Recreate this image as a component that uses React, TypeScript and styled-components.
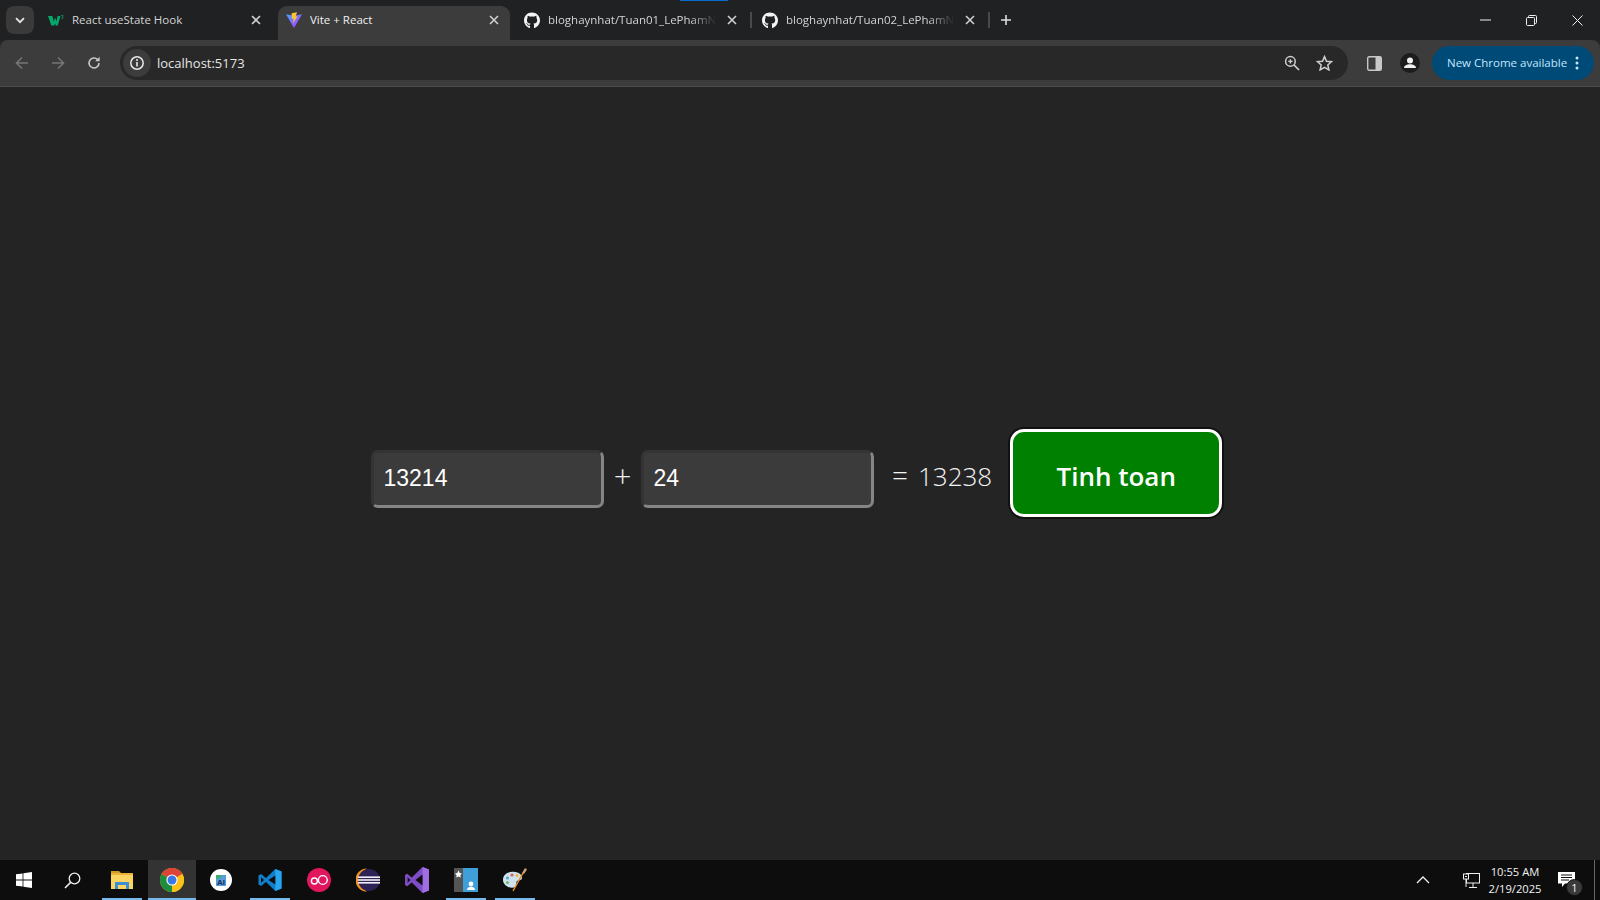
import React from "react";
import styled, { createGlobalStyle } from "styled-components";
import { FaGithub } from "react-icons/fa";

const Global = createGlobalStyle`
  html, body { margin: 0; padding: 0; height: 100%; background: #242424; overflow: hidden; }
  #root { height: 100%; }
  * { box-sizing: border-box; }
`;

const Screen = styled.div`
  width: 1600px;
  height: 900px;
  display: flex;
  flex-direction: column;
  font-family: "Open Sans", "Liberation Sans", sans-serif;
  color: #fff;
  position: relative;
`;

/* ---------- tab strip ---------- */
const TabStrip = styled.div`
  height: 40px;
  flex: none;
  background: #1f2122;
  display: flex;
  align-items: flex-start;
  padding-left: 6px;
  position: relative;
`;
const ProgressMark = styled.div`
  position: absolute;
  left: 680px;
  top: 0;
  width: 48px;
  height: 1px;
  background: #0a6cd0;
`;
const TabSearch = styled.div`
  width: 28px;
  height: 28px;
  margin: 6px 6px 0 0;
  border-radius: 8px;
  background: #3a3a3a;
  display: flex;
  align-items: center;
  justify-content: center;
`;
const Tab = styled.div<{ $active?: boolean; $sep?: boolean }>`
  width: 238px;
  height: 34px;
  margin-top: 6px;
  padding: 0 0 6px 8px;
  display: flex;
  align-items: center;
  position: relative;
  flex: none;
  font-size: 11.5px;
  color: ${(p) => (p.$active ? "#f1f1f1" : "#d4d4d4")};
  &::before {
    content: "";
    position: absolute;
    left: 0;
    top: 0;
    bottom: 0;
    width: 232px;
    background: ${(p) => (p.$active ? "#3c3c3c" : "transparent")};
    border-radius: 9px 9px 0 0;
  }
  &::after {
    content: "";
    display: ${(p) => (p.$sep ? "block" : "none")};
    position: absolute;
    left: 234px;
    top: 6px;
    width: 2px;
    height: 16px;
    background: #4a4a4a;
  }
`;
const Favicon = styled.span`
  width: 16px;
  height: 16px;
  flex: none;
  display: flex;
  align-items: center;
  justify-content: center;
  position: relative;
  color: #f4f4f4;
  margin-right: 8px;
`;
const TabTitle = styled.span<{ $fade?: boolean }>`
  width: 170px;
  flex: none;
  white-space: nowrap;
  overflow: hidden;
  position: relative;
  margin-top: -1px;
  ${(p) =>
    p.$fade
      ? "-webkit-mask-image: linear-gradient(90deg, #000 142px, transparent 168px); mask-image: linear-gradient(90deg, #000 142px, transparent 168px);"
      : ""}
`;
const TabClose = styled.span`
  width: 16px;
  height: 16px;
  margin-left: 6px;
  flex: none;
  display: flex;
  align-items: center;
  justify-content: center;
  position: relative;
`;
const NewTab = styled.div`
  width: 16px;
  height: 28px;
  margin: 6px 0 0 6px;
  display: flex;
  align-items: center;
  justify-content: center;
`;
const WindowControls = styled.div`
  margin-left: auto;
  display: flex;
`;
const WinButton = styled.div`
  width: 46px;
  height: 40px;
  display: flex;
  align-items: center;
  justify-content: center;
`;

/* ---------- toolbar ---------- */
const Toolbar = styled.div`
  height: 47px;
  flex: none;
  background: #3c3c3c;
  border-bottom: 1px solid #4c4c4c;
  border-top-left-radius: 8px;
  border-top-right-radius: 8px;
  display: flex;
  align-items: flex-start;
  padding: 6px 6px 0 4px;
`;
const ToolSlot = styled.div`
  width: 36px;
  height: 34px;
  flex: none;
  display: flex;
  align-items: center;
  justify-content: center;
`;
const Omnibox = styled.div`
  flex: 1;
  height: 34px;
  margin: 0 8px;
  border-radius: 17px;
  background: #282828;
  display: flex;
  align-items: center;
  padding-left: 3px;
  padding-right: 8px;
`;
const InfoChip = styled.div`
  width: 28px;
  height: 28px;
  border-radius: 50%;
  background: #3c3c3c;
  display: flex;
  align-items: center;
  justify-content: center;
  flex: none;
`;
const Url = styled.span`
  margin-left: 6px;
  font-size: 13px;
  color: #e6e6e6;
  flex: 1;
`;
const OmniIcon = styled.span`
  width: 32px;
  height: 28px;
  display: flex;
  align-items: center;
  justify-content: center;
  flex: none;
`;
const UpdatePill = styled.div`
  width: 162px;
  height: 34px;
  margin-left: 4px;
  flex: none;
  border-radius: 17px;
  background: #004a77;
  color: #c2e7ff;
  font-size: 11.5px;
  display: flex;
  align-items: center;
  padding-left: 15px;
  white-space: nowrap;
`;
const PillLabel = styled.span`
  width: 128px;
  flex: none;
  margin-top: -1px;
`;

/* ---------- page ---------- */
const Page = styled.main`
  flex: 1;
  background: #242424;
  display: flex;
  justify-content: flex-start;
  align-items: flex-start;
  padding: 342px 0 0 371px;
`;
const Calculator = styled.div`
  display: flex;
  align-items: baseline;
`;
const NumberInput = styled.input`
  width: 233px;
  height: 58px;
  padding: 0 9.5px;
  font: 23px "Liberation Sans", Arial, sans-serif;
  color: #fff;
  background: #3b3b3b;
  border: 3px solid;
  border-color: #343434 #858585 #858585 #343434;
  border-radius: 7px;
  outline: none;
`;
const Operator = styled.span`
  width: 37px;
  text-align: center;
  font-size: 31px;
  line-height: 1;
  font-weight: 300;
  color: #f0f0f0;
  transform: translateY(2px);
`;
const Result = styled.span`
  margin: 0 18px 0 18px;
  font-size: 26px;
  font-weight: 300;
  color: #f4f4f4;
  white-space: nowrap;
`;
const EqualSign = styled.span`
  font-size: 28px;
  margin-right: 10px;
`;
const CalcButton = styled.button`
  width: 212px;
  height: 88px;
  background: #008000;
  color: #fff;
  border: 3px solid #fff;
  border-radius: 14px;
  box-shadow: 0 0 0 2px #111;
  font-family: "Open Sans", sans-serif;
  font-size: 26px;
  font-weight: 600;
  padding: 6px 0 0;
`;

/* ---------- taskbar ---------- */
const Taskbar = styled.footer`
  height: 40px;
  flex: none;
  background: #0d0d0d;
  display: flex;
  align-items: stretch;
  font-size: 12px;
  color: #f2f2f2;
`;
const TaskSlot = styled.div<{ $w?: number; $open?: boolean; $focus?: boolean }>`
  width: ${(p) => p.$w ?? 48}px;
  flex: none;
  position: relative;
  display: flex;
  align-items: center;
  justify-content: center;
  background: ${(p) => (p.$focus ? "#333333" : "transparent")};
  &::after {
    content: "";
    display: ${(p) => (p.$open ? "block" : "none")};
    position: absolute;
    left: 50%;
    width: ${(p) => (p.$focus ? 48 : 40)}px;
    margin-left: ${(p) => (p.$focus ? -24 : -20)}px;
    bottom: 0;
    height: 2px;
    background: #76b9ed;
  }
`;
const TraySpacer = styled.div`
  flex: 1;
`;
const TrayGap = styled.div`
  width: 20px;
  flex: none;
`;
const Clock = styled.div`
  width: 68px;
  flex: none;
  display: flex;
  flex-direction: column;
  align-items: center;
  justify-content: center;
  font-size: 11.2px;
  line-height: 17px;
  white-space: nowrap;
  margin-right: 1px;
`;
const NotifySlot = styled.div`
  width: 36px;
  flex: none;
  position: relative;
  display: flex;
  align-items: center;
  justify-content: center;
  padding-right: 4px;
  margin-right: 8px;
`;
const NotifyBadge = styled.span`
  position: absolute;
  left: 16px;
  top: 19px;
  width: 17px;
  height: 17px;
  border-radius: 50%;
  background: #3a3a3a;
  border: 1px solid #111;
  color: #f2f2f2;
  font-size: 11px;
  line-height: 15px;
  text-align: center;
`;
const DesktopEdge = styled.div`
  width: 6px;
  flex: none;
  border-left: 1px solid #666;
`;

/* ---------- icons ---------- */
const Close = () => (
  <svg width="12" height="12" viewBox="0 0 12 12">
    <path d="M2 2 L10 10 M10 2 L2 10" stroke="#d0d0d0" strokeWidth="1.6" />
  </svg>
);
const W3 = () => (
  <svg width="18" height="13" viewBox="0 0 18 13">
    <path d="M0 1.500H5L6.400 7.500 8 3 9.600 7.500 10.800 1.500H14L11 12H8.700L7.900 9.500 7.100 12H3.800z" fill="#04aa6d" />
    <path d="M14.800 .5h2.400v.6l-1 1c.8 0 1.200.5 1.200 1.100 0 .8-.7 1.200-1.400 1.200-.5 0-1-.1-1.200-.4l.3-.5c.3.2.6.3.9.3.3 0 .6-.2.6-.5s-.3-.5-.9-.5v-.5l.9-1h-1.800z" fill="#04aa6d" />
  </svg>
);
const ViteIcon = () => (
  <svg width="18" height="18" viewBox="0 0 18 18">
    <defs>
      <linearGradient id="vite" x1="0" y1="0" x2="1" y2="1">
        <stop offset="0" stopColor="#41a6ff" />
        <stop offset="1" stopColor="#bd34fe" />
      </linearGradient>
    </defs>
    <path d="M0 2.500 L9 4.200 L18 2.500 L9.400 17.500 H8.600 Z" fill="url(#vite)" />
    <path d="M6.300 1.300 L12.400 .3 L10.800 5 L13 4.700 L7.800 13 L8.800 7.400 L6.600 7.800 Z" fill="#fdc62e" />
  </svg>
);
const Chevron = () => (
  <svg width="10" height="7" viewBox="0 0 10 7">
    <path d="M1 1.200 L5 5.200 L9 1.200" stroke="#e6e6e6" strokeWidth="1.800" fill="none" />
  </svg>
);
const Plus = () => (
  <svg width="12" height="12" viewBox="0 0 12 12">
    <path d="M6 1v10M1 6h10" stroke="#dedede" strokeWidth="1.600" />
  </svg>
);
const ArrowLeft = () => (
  <svg width="14" height="14" viewBox="0 0 14 14">
    <path d="M13 7H2M7 1.500 1.500 7 7 12.500" stroke="#757575" strokeWidth="1.600" fill="none" />
  </svg>
);
const ArrowRight = () => (
  <svg width="14" height="14" viewBox="0 0 14 14">
    <path d="M1 7h11M7 1.500 12.500 7 7 12.500" stroke="#757575" strokeWidth="1.600" fill="none" />
  </svg>
);
const Reload = () => (
  <svg width="14" height="14" viewBox="0 0 14 14">
    <path d="M12 7a5 5 0 1 1-1.600-3.700" stroke="#c8c8c8" strokeWidth="1.600" fill="none" />
    <path d="M12.600 0.800v4.400H8.200z" fill="#c8c8c8" />
  </svg>
);
const Info = () => (
  <svg width="16" height="16" viewBox="0 0 16 16">
    <circle cx="8" cy="8" r="6.200" stroke="#e8e8e8" strokeWidth="1.500" fill="none" />
    <path d="M8 7v4.400" stroke="#e8e8e8" strokeWidth="1.600" />
    <circle cx="8" cy="4.900" r="1" fill="#e8e8e8" />
  </svg>
);
const ZoomIcon = () => (
  <svg width="16" height="16" viewBox="0 0 16 16">
    <circle cx="6.400" cy="6.400" r="4.800" stroke="#d0d0d0" strokeWidth="1.500" fill="none" />
    <path d="M10 10l5 5" stroke="#d0d0d0" strokeWidth="1.700" />
    <path d="M6.400 4.200v4.400M4.200 6.400h4.400" stroke="#d0d0d0" strokeWidth="1.400" />
  </svg>
);
const Star = () => (
  <svg width="17" height="16" viewBox="0 0 17 16">
    <path d="M8.500 1.600l2 4.600 5 .5-3.700 3.300 1.100 4.900-4.400-2.600-4.400 2.600 1.100-4.900L1.500 6.700l5-.5z" stroke="#d0d0d0" strokeWidth="1.500" fill="none" />
  </svg>
);
const SidePanel = () => (
  <svg width="15" height="15" viewBox="0 0 15 15">
    <rect x=".7" y=".7" width="13.600" height="13.600" rx="1.500" fill="#3c3c3c" stroke="#c8c8c8" strokeWidth="1.400" />
    <rect x="8.500" y="1" width="5.500" height="13" fill="#c8c8c8" />
  </svg>
);
const Avatar = () => (
  <svg width="20" height="20" viewBox="0 0 20 20">
    <circle cx="10" cy="10" r="10" fill="#1c1c1c" />
    <circle cx="10" cy="7.400" r="3" fill="#f0f0f0" />
    <path d="M4 15c0-2.600 3-3.800 6-3.800s6 1.200 6 3.800z" fill="#f0f0f0" />
  </svg>
);
const Dots = () => (
  <svg width="4" height="14" viewBox="0 0 4 14">
    <circle cx="2" cy="2" r="1.500" fill="#c2e7ff" />
    <circle cx="2" cy="7" r="1.500" fill="#c2e7ff" />
    <circle cx="2" cy="12" r="1.500" fill="#c2e7ff" />
  </svg>
);
const Minimize = () => (
  <svg width="11" height="2" viewBox="0 0 11 2">
    <path d="M0 1h11" stroke="#f0f0f0" strokeWidth="1" />
  </svg>
);
const Restore = () => (
  <svg width="11" height="11" viewBox="0 0 11 11">
    <rect x=".5" y="2.500" width="8" height="8" rx="1" fill="none" stroke="#f0f0f0" />
    <path d="M2.500 2.500V1.500a1 1 0 0 1 1-1h6a1 1 0 0 1 1 1v6a1 1 0 0 1-1 1h-1" fill="none" stroke="#f0f0f0" />
  </svg>
);
const WinClose = () => (
  <svg width="11" height="11" viewBox="0 0 11 11">
    <path d="M.5.5l10 10M10.500.5l-10 10" stroke="#f0f0f0" strokeWidth="1" />
  </svg>
);

const WindowsLogo = () => (
  <svg width="16" height="16" viewBox="0 0 16 16">
    <path d="M0 2.300 6.600 1.400V7.600H0zM7.400 1.300 16 0V7.600H7.400zM0 8.400H6.600V14.600L0 13.700zM7.400 8.400H16V16L7.400 14.700z" fill="#fff" />
  </svg>
);
const SearchGlass = () => (
  <svg width="17" height="17" viewBox="0 0 17 17">
    <circle cx="10.500" cy="6.500" r="5.300" stroke="#f0f0f0" strokeWidth="1.300" fill="none" />
    <path d="M6.600 10.400 1 16" stroke="#f0f0f0" strokeWidth="1.500" />
  </svg>
);
const Explorer = () => (
  <svg width="22" height="20" viewBox="0 0 22 20">
    <path d="M0 1h8l2 2H0z" fill="#d39a1e" />
    <rect x="0" y="3" width="22" height="16" fill="#fcd462" />
    <rect x="0" y="3" width="22" height="2" fill="#e9b23a" />
    <path d="M4 19v-7h14v7h-3v-4H7v4z" fill="#3a8fd6" />
    <rect x="8" y="15" width="6" height="4" fill="#fcd462" />
  </svg>
);
const ChromeLogo = () => (
  <svg width="24" height="24" viewBox="0 0 24 24">
    <circle cx="12" cy="12" r="12" fill="#fbc116" />
    <path d="M12 12 1.600 6A12 12 0 0 1 22.400 6z" fill="#db4437" />
    <path d="M12 12 1.600 6A12 12 0 0 0 12 24z" fill="#1e8e3e" />
    <path d="M12 12 22.400 6A12 12 0 0 1 12 24z" fill="#fbc116" />
    <circle cx="12" cy="12" r="5.600" fill="#fff" />
    <circle cx="12" cy="12" r="4.500" fill="#3b78e7" />
  </svg>
);
const AiBadge = () => (
  <svg width="22" height="22" viewBox="0 0 22 22">
    <circle cx="11" cy="11" r="11" fill="#fff" />
    <path d="M6 6h10v11H6z" fill="#5a9bdc" />
    <path d="M6 6h6L9 10H6z" fill="#38b06a" />
    <text x="11" y="15.500" fontSize="8" fontWeight="700" textAnchor="middle" fill="#12305c" fontFamily="Liberation Sans">AI</text>
  </svg>
);
const VSCode = () => (
  <svg width="24" height="24" viewBox="0 0 24 24">
    <path d="M17.300 1 23.500 3.600V20.400L17.300 23 8 14 3 18 .5 16.600V7.400L3 6l5 4z" fill="#0f7fcc" />
    <path d="M17.300 1 23.500 3.600V20.400L17.300 23z" fill="#29a5ef" />
    <path d="M17.300 7.500 10.500 12l6.800 4.500z" fill="#0d0d0d" />
    <path d="M3 9.200 6 12l-3 2.800z" fill="#0d0d0d" />
  </svg>
);
const RedRings = () => (
  <svg width="24" height="24" viewBox="0 0 24 24">
    <circle cx="12" cy="12" r="12" fill="#e2165e" />
    <circle cx="7.400" cy="13" r="3" stroke="#fff" strokeWidth="1.400" fill="none" />
    <circle cx="15.800" cy="12" r="4.400" stroke="#fff" strokeWidth="1.400" fill="none" />
  </svg>
);
const Eclipse = () => (
  <svg width="24" height="24" viewBox="0 0 24 24">
    <path d="M11 .5A11.500 11.500 0 0 0 11 23.500 13 13 0 0 1 11 .5z" fill="#f7941e" />
    <circle cx="13" cy="12" r="11" fill="#2c2255" />
    <rect x="2" y="8.400" width="22" height="1.600" fill="#f3f1f8" />
    <rect x="2" y="11.200" width="22" height="1.600" fill="#f3f1f8" />
    <rect x="2" y="14" width="22" height="1.600" fill="#f3f1f8" />
  </svg>
);
const VisualStudio = () => (
  <svg width="24" height="26" viewBox="0 0 24 26">
    <path d="M17.500 0 24 2.600V23.400L17.500 26 6.800 15.600 2.200 19.200 0 18V8l2.200-1.200 4.600 3.600z" fill="#7e4cc4" />
    <path d="M17.500 0 24 2.600V23.400L17.500 26z" fill="#a06ee0" />
    <path d="M17.500 7.600 10.400 13l7.100 5.400z" fill="#0d0d0d" />
    <path d="M2.600 10.200 5.400 13l-2.800 2.800z" fill="#0d0d0d" />
  </svg>
);
const PinnedApp = () => (
  <svg width="24" height="24" viewBox="0 0 24 24">
    <rect width="9" height="24" fill="#555" />
    <rect x="9" width="15" height="24" fill="#3f9fd8" />
    <path d="M4.500 2.500 5.700 5 8 5.400 6.300 7.200 6.800 9.600 4.500 8.500 2.200 9.600 2.700 7.200 1 5.400 3.300 5z" fill="#fff" />
    <circle cx="17" cy="16" r="2.400" fill="#fff" />
    <path d="M13 22c0-2.400 2-3.200 4-3.200s4 .8 4 3.200z" fill="#fff" />
  </svg>
);
const Palette = () => (
  <svg width="26" height="26" viewBox="0 0 26 26">
    <path d="M1 13C1 7 7 4 13 5c5 .8 7 3 7 6 0 2.500-3.500 2-5 3-1.500 1.200.5 4-2 6-3.500 2.500-12-1-12-7z" fill="#cfe3ee" />
    <circle cx="5.500" cy="11" r="1.600" fill="#58a6d6" />
    <circle cx="10" cy="8" r="1.600" fill="#e25d5d" />
    <circle cx="15" cy="8.500" r="1.500" fill="#e7b83f" />
    <circle cx="5.500" cy="15.500" r="1.600" fill="#6cba6c" />
    <path d="M11 24 21 6" stroke="#e28a2b" strokeWidth="1.500" />
    <path d="M20 6 23 1 25 2.500 22 7z" fill="#c9a36b" />
  </svg>
);
const TrayUp = () => (
  <svg width="14" height="8" viewBox="0 0 14 8">
    <path d="M1 7 7 1l6 6" stroke="#f0f0f0" strokeWidth="1.300" fill="none" />
  </svg>
);
const NetworkIcon = () => (
  <svg width="17" height="15" viewBox="0 0 17 15">
    <rect x="3.500" y=".5" width="13" height="9.500" fill="none" stroke="#f0f0f0" />
    <rect x=".5" y="1" width="5" height="5" fill="#0d0d0d" stroke="#f0f0f0" />
    <path d="M2 3.500h2M10 10v4M6 14.500h8M3 6v8" stroke="#f0f0f0" />
  </svg>
);
const NotifyIcon = () => (
  <svg width="17" height="16" viewBox="0 0 17 16">
    <path d="M0 0h17v11.500H7l-3 3.500v-3.500H0z" fill="#fff" />
    <path d="M3 3h11M3 5.500h11M3 8h8" stroke="#0d0d0d" strokeWidth="1" />
  </svg>
);

const TITLE_1 = "bloghaynhat/Tuan01_LePhamN";
const TITLE_2 = "bloghaynhat/Tuan02_LePhamN";

export default function App() {
  return (
    <Screen>
      <Global />
      <TabStrip>
        <ProgressMark />
        <TabSearch><Chevron /></TabSearch>
        <Tab>
          <Favicon><W3 /></Favicon>
          <TabTitle>React useState Hook</TabTitle>
          <TabClose><Close /></TabClose>
        </Tab>
        <Tab $active>
          <Favicon><ViteIcon /></Favicon>
          <TabTitle>Vite + React</TabTitle>
          <TabClose><Close /></TabClose>
        </Tab>
        <Tab $sep>
          <Favicon><FaGithub size={17} /></Favicon>
          <TabTitle $fade>{TITLE_1}</TabTitle>
          <TabClose><Close /></TabClose>
        </Tab>
        <Tab $sep>
          <Favicon><FaGithub size={17} /></Favicon>
          <TabTitle $fade>{TITLE_2}</TabTitle>
          <TabClose><Close /></TabClose>
        </Tab>
        <NewTab><Plus /></NewTab>
        <WindowControls>
          <WinButton><Minimize /></WinButton>
          <WinButton><Restore /></WinButton>
          <WinButton><WinClose /></WinButton>
        </WindowControls>
      </TabStrip>

      <Toolbar>
        <ToolSlot><ArrowLeft /></ToolSlot>
        <ToolSlot><ArrowRight /></ToolSlot>
        <ToolSlot><Reload /></ToolSlot>
        <Omnibox>
          <InfoChip><Info /></InfoChip>
          <Url>localhost:5173</Url>
          <OmniIcon><ZoomIcon /></OmniIcon>
          <OmniIcon><Star /></OmniIcon>
        </Omnibox>
        <ToolSlot><SidePanel /></ToolSlot>
        <ToolSlot><Avatar /></ToolSlot>
        <UpdatePill>
          <PillLabel>New Chrome available</PillLabel>
          <Dots />
        </UpdatePill>
      </Toolbar>

      <Page>
        <Calculator>
          <NumberInput defaultValue="13214" />
          <Operator>+</Operator>
          <NumberInput defaultValue="24" />
          <Result><EqualSign>=</EqualSign>13238</Result>
          <CalcButton>Tinh toan</CalcButton>
        </Calculator>
      </Page>

      <Taskbar>
        <TaskSlot><WindowsLogo /></TaskSlot>
        <TaskSlot><SearchGlass /></TaskSlot>
        <TaskSlot $open $w={52}><Explorer /></TaskSlot>
        <TaskSlot $open $focus><ChromeLogo /></TaskSlot>
        <TaskSlot $w={49}><AiBadge /></TaskSlot>
        <TaskSlot $open $w={49}><VSCode /></TaskSlot>
        <TaskSlot $w={49}><RedRings /></TaskSlot>
        <TaskSlot $w={49}><Eclipse /></TaskSlot>
        <TaskSlot $w={49}><VisualStudio /></TaskSlot>
        <TaskSlot $open $w={49}><PinnedApp /></TaskSlot>
        <TaskSlot $open $w={49}><Palette /></TaskSlot>
        <TraySpacer />
        <TaskSlot $w={36}><TrayUp /></TaskSlot>
        <TrayGap />
        <TaskSlot $w={20}><NetworkIcon /></TaskSlot>
        <Clock>
          <span>10:55 AM</span>
          <span>2/19/2025</span>
        </Clock>
        <NotifySlot>
          <NotifyIcon />
          <NotifyBadge>1</NotifyBadge>
        </NotifySlot>
        <DesktopEdge />
      </Taskbar>
    </Screen>
  );
}
